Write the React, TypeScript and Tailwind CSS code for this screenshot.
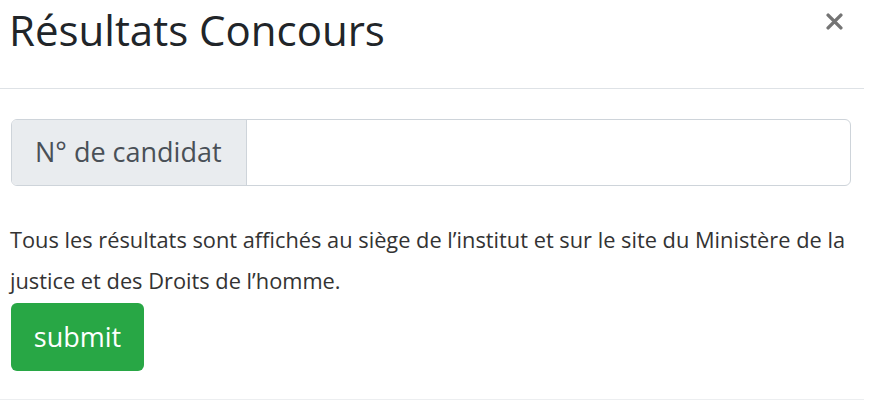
export default function App() {
  return (
    <div className="w-[870px] h-[400px] bg-white font-['Open_Sans',sans-serif] text-[#212529] overflow-hidden flex flex-col">
      <div className="mr-[6px] h-[89px] border-b border-[#dee2e6] flex justify-between items-start pl-[9px] pr-[21px]">
        <h2 className="text-[42px] leading-none pt-[9px] font-normal">Résultats Concours</h2>
        <button className="mt-[13px] w-[17px] h-[17px] text-[#747474]" aria-label="Close">
          <svg viewBox="0 0 16 16" className="w-full h-full">
            <path d="M2 2L14 14M14 2L2 14" stroke="currentColor" strokeWidth="3.2" strokeLinecap="round" />
          </svg>
        </button>
      </div>
      <div className="pl-[11px] pr-[19px] pt-[30px]">
        <div className="flex h-[67px] rounded-[6px] border border-[#ced4da] overflow-hidden">
          <span className="w-[235px] bg-[#e9ecef] border-r border-[#ced4da] flex items-center pl-[23px] text-[27px] text-[#495057]">
            N° de candidat
          </span>
          <input className="flex-1 outline-none px-4 text-[24px]" />
        </div>
        <p className="mt-[33px] text-[21.8px] leading-[41px] -ml-[1px] text-[#333]">
          Tous les résultats sont affichés au siège de l’institut et sur le site du Ministère de la justice et des Droits de l’homme.
        </p>
        <button className="mt-[2px] h-[68px] w-[133px] rounded-[6px] bg-[#28a745] text-white text-[27px]">submit</button>
      </div>
      <div className="mt-auto mr-[6px] border-t border-[#eceef0]" />
    </div>
  );
}
